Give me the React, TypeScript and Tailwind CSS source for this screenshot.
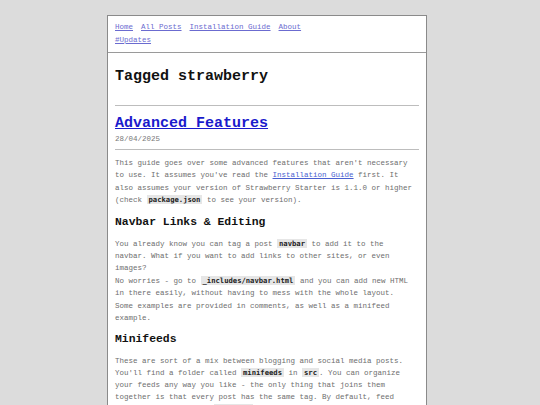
import React from "react";

const mono = "font-['Liberation_Mono','Courier_New',monospace]";

function Code({ children }: { children: React.ReactNode }) {
  return (
    <code className="font-['DejaVu_Sans_Mono',monospace] font-bold text-[7.2px] text-[#222] bg-[#e6e6e6] px-[2px]">
      {children}
    </code>
  );
}

const navLinks = ["Home", "All Posts", "Installation Guide", "About"];

export default function App() {
  return (
    <div className={`min-h-[405px] bg-[#dcdcdc] pl-[107px] pt-[15px] ${mono}`}>
      <div className="w-[320px] bg-white border border-[#8a8a8a] min-h-[420px]">
        {/* Header nav */}
        <header className="px-[7px] pt-[5px] pb-[5px] border-b border-[#9a9a9a] text-[7.5px] leading-[13px]">
          <nav className="flex gap-[8px]">
            {navLinks.map((l) => (
              <a key={l} href="#" className="text-[#6b6bd0] underline">
                {l}
              </a>
            ))}
          </nav>
          <div>
            <a href="#" className="text-[#6b6bd0] underline">
              #Updates
            </a>
          </div>
        </header>

        {/* Main */}
        <main className="px-[7px]">
          <h1 className="mt-[15px] text-[15px] leading-[18px] font-bold text-[#111]">
            Tagged strawberry
          </h1>
          <hr className="mt-[19px] border-t border-[#bdbdbd]" />

          <article>
            <h2 className="mt-[9px] text-[15px] leading-[18px] font-bold">
              <a href="#" className="text-[#1a1acc] underline">
                Advanced Features
              </a>
            </h2>
            <div className="mt-[1px] text-[7.5px] leading-[10px] text-[#777]">
              28/04/2025
            </div>
            <hr className="mt-[5px] border-t border-[#bdbdbd]" />

            <p className="w-[299px] mt-[7px] text-[7.5px] leading-[12.4px] text-[#6e6e6e]">
              This guide goes over some advanced features that aren't necessary
              to use. It assumes you've read the{" "}
              <a href="#" className="text-[#4a5fd0] underline">
                Installation Guide
              </a>{" "}
              first. It also assumes your version of Strawberry Starter is 1.1.0
              or higher (check <Code>package.json</Code> to see your version).
            </p>

            <h3 className="mt-[8px] text-[11.4px] leading-[14px] font-bold text-[#111]">
              Navbar Links &amp; Editing
            </h3>
            <p className="w-[299px] mt-[9px] text-[7.5px] leading-[12.4px] text-[#6e6e6e]">
              You already know you can tag a post <Code>navbar</Code> to add it
              to the navbar. What if you want to add links to other sites, or
              even images?
              <br />
              No worries - go to <Code>_includes/navbar.html</Code> and you can
              add new HTML in there easily, without having to mess with the
              whole layout. Some examples are provided in comments, as well as a
              minifeed example.
            </p>

            <h3 className="mt-[8px] text-[11.4px] leading-[14px] font-bold text-[#111]">
              Minifeeds
            </h3>
            <p className="w-[299px] mt-[9px] text-[7.5px] leading-[12px] text-[#6e6e6e]">
              These are sort of a mix between blogging and social media posts.
              You'll find a folder called <Code>minifeeds</Code> in{" "}
              <Code>src</Code>. You can organize your feeds any way you like -
              the only thing that joins them together is that every post has the
              same tag. By default, feed items are tagged with{" "}
              <Code>minifeed</Code> so they show up on the homepage.
            </p>
          </article>
        </main>
      </div>
    </div>
  );
}
